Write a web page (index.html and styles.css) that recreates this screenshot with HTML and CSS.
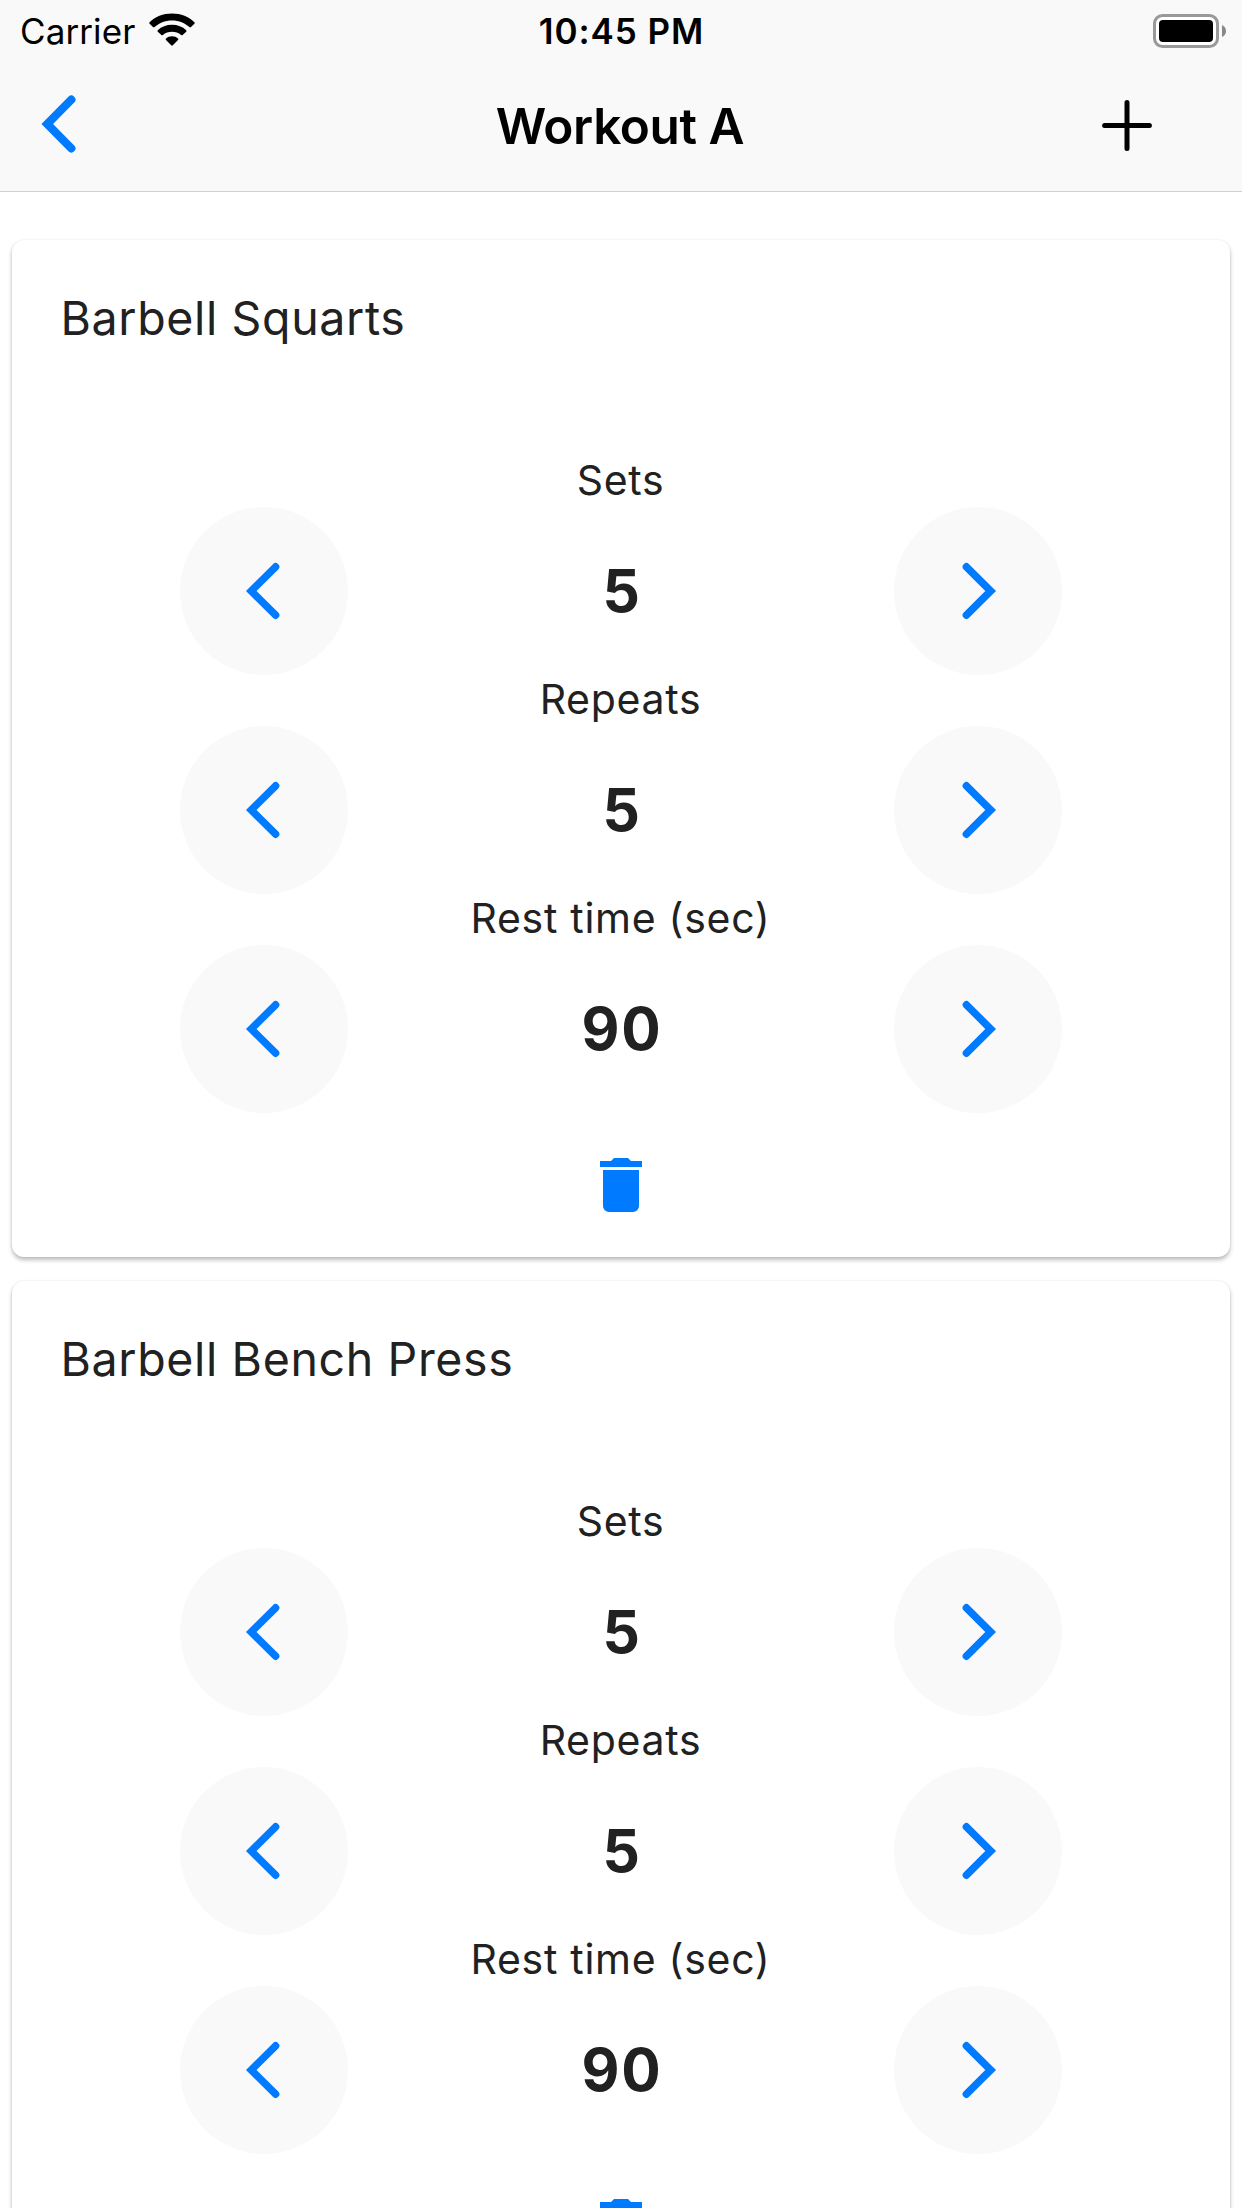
FILE: index.html
```
<!DOCTYPE html>
<html lang="en">
<head>
<meta charset="utf-8">
<title>Workout A</title>
<link rel="stylesheet" href="styles.css">
</head>
<body>
<svg class="defs" width="0" height="0" aria-hidden="true">
  <symbol id="prev" viewBox="0 0 168 168"><path d="M95.600 59.800 71.300 84l24.300 24.200" fill="none" stroke="currentColor" stroke-width="7.500" stroke-linecap="round"/></symbol>
  <symbol id="next" viewBox="0 0 168 168"><path d="M72.400 59.800 96.700 84l-24.300 24.200" fill="none" stroke="currentColor" stroke-width="7.500" stroke-linecap="round"/></symbol>
  <symbol id="trash" viewBox="0 0 42 54"><path d="M0 3h11l3-3h14l3 3h11v6H0zM3 12h36v36a6 6 0 0 1-6 6H9a6 6 0 0 1-6-6z" fill="currentColor"/></symbol>
</svg>
<header class="header">
  <div class="status">
    <div class="network">
      <span>Carrier</span>
      <svg class="wifi" width="46" height="34" viewBox="0 0 46 34">
        <path d="M23 0.5C32 .5 39.8 3.8 45.4 9.2q.7.8 0 1.500L42 14.1q-.8.7-1.600 0C36.200 10.100 30 7.500 23 7.500S9.800 10.100 5.600 14.100q-.8.7-1.600 0L.6 10.700q-.7-.7 0-1.500C6.200 3.800 14 .5 23 .5z"/>
        <path d="M23 11.800c5.600 0 10.600 2 14.200 5.400q.7.7 0 1.500L33.600 22q-.7.7-1.500 0C29.600 19.900 26.500 18.800 23 18.800S16.400 19.900 13.900 22q-.8.7-1.500 0L8.800 18.700q-.7-.8 0-1.500C12.400 13.800 17.400 11.800 23 11.800z"/>
        <path d="M23 23.200c2.400 0 4.400.8 6 2.200q.8.800 0 1.500l-5.200 5.400q-.8.900-1.600 0L17 26.900q-.8-.7 0-1.500c1.600-1.400 3.600-2.200 6-2.200z"/>
      </svg>
    </div>
    <span class="time">10:45 PM</span>
    <svg class="battery" width="74" height="34" viewBox="0 0 74 34">
      <rect x="1.500" y="1.500" width="63" height="31" rx="8" fill="#fff" stroke="#999" stroke-width="3"/>
      <rect x="6" y="6" width="54" height="22" rx="4"/>
      <path d="M69 11q4 2 4 6t-4 6z" fill="#888"/>
    </svg>
  </div>
  <nav class="nav">
    <svg class="back" width="36" height="58" viewBox="0 0 36 58"><path d="M31.300 4.700 7.200 29l24.100 24.300" fill="none" stroke="currentColor" stroke-width="8.200" stroke-linecap="round"/></svg>
    <h1 class="nav-title">Workout A</h1>
    <svg class="add" width="50" height="51" viewBox="0 0 50 51"><path d="M25 2.600v45.800M2.600 25.500h44.800" stroke="#000" stroke-width="5" stroke-linecap="round"/></svg>
  </nav>
</header>
<main class="list">
  <section class="card">
    <h2 class="card-title">Barbell Squarts</h2>
    <div class="label">Sets</div>
    <div class="stepper"><svg class="step"><use href="#prev"/></svg><b class="value">5</b><svg class="step"><use href="#next"/></svg></div>
    <div class="label">Repeats</div>
    <div class="stepper"><svg class="step"><use href="#prev"/></svg><b class="value">5</b><svg class="step"><use href="#next"/></svg></div>
    <div class="label">Rest time (sec)</div>
    <div class="stepper"><svg class="step"><use href="#prev"/></svg><b class="value">90</b><svg class="step"><use href="#next"/></svg></div>
    <div class="actions"><svg class="trash"><use href="#trash"/></svg></div>
  </section>
  <section class="card">
    <h2 class="card-title">Barbell Bench Press</h2>
    <div class="label">Sets</div>
    <div class="stepper"><svg class="step"><use href="#prev"/></svg><b class="value">5</b><svg class="step"><use href="#next"/></svg></div>
    <div class="label">Repeats</div>
    <div class="stepper"><svg class="step"><use href="#prev"/></svg><b class="value">5</b><svg class="step"><use href="#next"/></svg></div>
    <div class="label">Rest time (sec)</div>
    <div class="stepper"><svg class="step"><use href="#prev"/></svg><b class="value">90</b><svg class="step"><use href="#next"/></svg></div>
    <div class="actions"><svg class="trash"><use href="#trash"/></svg></div>
  </section>
</main>
</body>
</html>
```
FILE: styles.css
```
* { box-sizing: border-box; }

body {
  margin: 0;
  height: 2208px;
  overflow: hidden;
  background: #fff;
  color: #212121;
  font-family: Inter, "Liberation Sans", sans-serif;
}

svg { display: block; }
.defs { display: none; }

.header {
  height: 192px;
  background: #f9f9f9;
  border-bottom: 1px solid #d0d0d0;
  color: #000;
}

.status {
  display: grid;
  grid-template-columns: 1fr auto 1fr;
  align-items: center;
  height: 60px;
  padding: 0 15px 0 20px;
  font-size: 35px;
  line-height: 62px;
}

.network { display: flex; align-items: center; gap: 14px; letter-spacing: 0.1px; }
.wifi { margin-top: -2px; }
.time { font-weight: 600; letter-spacing: 0.95px; margin: 0 2px 0 -2px; }
.battery { justify-self: end; }

.nav {
  display: grid;
  grid-template-columns: 1fr auto 1fr;
  align-items: center;
  height: 131px;
  padding: 0 90px 0 40px;
}

.back { color: #007aff; margin-top: -4px; }
.nav-title {
  margin: 0 -48px 0 0;
  font-size: 49.500px;
  font-weight: 600;
  letter-spacing: -0.4px;
  line-height: 60px;
}
.add { justify-self: end; }

.list {
  display: flex;
  flex-direction: column;
  gap: 24px;
  padding: 48px 12px 0;
}

.card {
  flex: none;
  height: 1017px;
  padding-top: 50px;
  border-radius: 12px;
  background: #fff;
  box-shadow: 0 3px 4px rgba(0, 0, 0, 0.26), 0 0 2px rgba(0, 0, 0, 0.1);
}

.card-title {
  margin: 0 0 110px;
  padding-left: 48.500px;
  font-size: 46.500px;
  font-weight: 400;
  letter-spacing: 0.64px;
  line-height: 56px;
}

.label {
  height: 51px;
  padding-right: 1px;
  font-size: 41px;
  letter-spacing: 0.71px;
  line-height: 48px;
  text-align: center;
}

.stepper {
  display: grid;
  grid-template-columns: 168px 1fr 168px;
  align-items: center;
  height: 168px;
  padding: 0 168px;
}

.step {
  width: 168px;
  height: 168px;
  border-radius: 50%;
  background: #f9f9f9;
  color: #007aff;
}

.value {
  padding: 0 0 2px 2px;
  font-size: 58.500px;
  font-weight: 700;
  letter-spacing: 1.700px;
  text-align: center;
}

.actions {
  display: flex;
  align-items: center;
  justify-content: center;
  height: 144px;
}

.trash { width: 42px; height: 54px; color: #007aff; }
```
